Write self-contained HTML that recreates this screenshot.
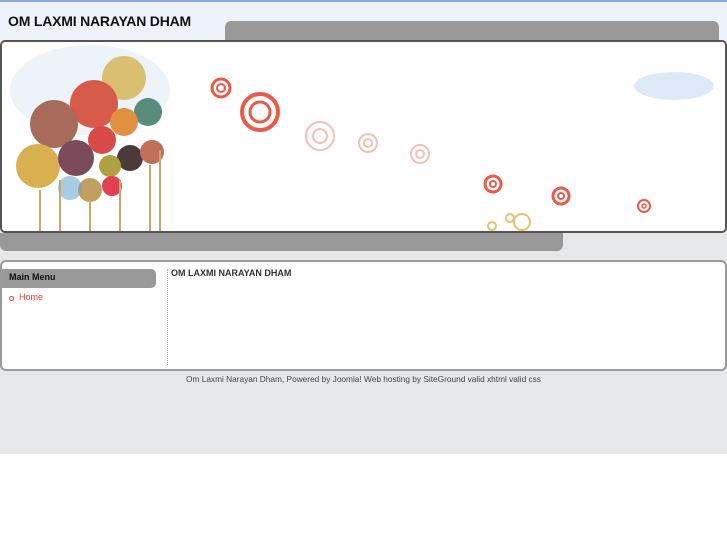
<!DOCTYPE html>
<html><head><style>
body{margin:0;width:727px;height:545px;background:#fff;font-family:"Liberation Sans",sans-serif;position:relative;overflow:hidden}
.top{position:absolute;left:0;top:0;width:727px;height:42px;background:#eef2fb;border-top:2px solid #8ca9e2;box-sizing:border-box}
.title{position:absolute;left:8px;top:11px;font-size:14px;font-weight:bold;color:#111;letter-spacing:-0.2px}
.tab{position:absolute;left:225px;top:21px;width:494px;height:22px;background:#999;border-radius:6px 6px 0 0}
.grey{position:absolute;left:0;top:232px;width:727px;height:222px;background:#e6e7e9}
.banner{position:absolute;left:0;top:40px;width:727px;height:193px;box-sizing:border-box;border:2px solid #555;border-radius:5px;background:#fff;overflow:hidden}
.bar{position:absolute;left:0;top:233px;width:563px;height:18px;background:#999;border-radius:0 0 6px 6px}
.content{position:absolute;left:0;top:260px;width:727px;height:111px;box-sizing:border-box;border:2px solid #9a9a9a;border-radius:6px;background:#fff}
.mm{position:absolute;left:0;top:7px;width:154px;height:19px;background:#999;border-radius:0 5px 5px 0;font-size:9px;font-weight:bold;color:#111;line-height:17px;padding-left:7px;box-sizing:border-box}
.home{position:absolute;left:17px;top:30px;font-size:9px;color:#e0452f}
.bul{position:absolute;left:7px;top:34px;width:3px;height:3px;border:1px solid #e0452f;border-radius:50%}
.div{position:absolute;left:165px;top:7px;height:96px;border-left:1px dotted #9ab6e0}
.h{position:absolute;left:169px;top:6px;font-size:9px;font-weight:bold;color:#333}
.foot{position:absolute;left:0;top:374px;width:727px;text-align:center;font-size:8.3px;color:#444}
</style></head><body>
<div class="top"><div class="title">OM LAXMI NARAYAN DHAM</div></div>
<div class="tab"></div>
<div class="grey"></div>
<div class="banner">
<svg width="727" height="193" style="position:absolute;left:-2px;top:-2px" viewBox="0 40 727 193">
<g fill="none">
<ellipse cx="90" cy="90" rx="80" ry="45" fill="#cfe2ef" opacity=".4"/>
<circle cx="124" cy="78" r="22" fill="#d8c070"/>
<circle cx="94" cy="104" r="24" fill="#d85a4a"/>
<circle cx="54" cy="124" r="24" fill="#a86a5a"/>
<circle cx="148" cy="112" r="14" fill="#5a8a7a"/>
<circle cx="124" cy="122" r="14" fill="#e09040"/>
<circle cx="38" cy="166" r="22" fill="#d8b050"/>
<circle cx="76" cy="158" r="18" fill="#7a4a5a"/>
<circle cx="102" cy="140" r="14" fill="#d84a4a"/>
<circle cx="130" cy="158" r="13" fill="#4a3a3a"/>
<circle cx="152" cy="152" r="12" fill="#c0705a"/>
<circle cx="110" cy="166" r="11" fill="#b0a040"/>
<circle cx="90" cy="190" r="12" fill="#c0a060"/>
<circle cx="112" cy="186" r="10" fill="#e04050"/>
<circle cx="70" cy="188" r="12" fill="#6aa8d0" opacity=".6"/>
<path d="M40 190v45M60 180v55M90 200v35M120 180v55M150 165v70M160 150v85" stroke="#c8a868" stroke-width="2"/>
<g stroke="#e85a4a" stroke-width="3">
<circle cx="221" cy="88" r="9"/><circle cx="221" cy="88" r="4" stroke-width="2"/>
<circle cx="260" cy="112" r="18" stroke-width="4"/><circle cx="260" cy="112" r="10"/>
<circle cx="493" cy="184" r="8"/><circle cx="493" cy="184" r="3" stroke-width="2"/>
<circle cx="561" cy="196" r="8"/><circle cx="561" cy="196" r="3" stroke-width="2"/>
<circle cx="644" cy="206" r="6" stroke-width="2"/><circle cx="644" cy="206" r="2" stroke-width="1.5"/>
</g>
<g stroke="#f4c0b8" stroke-width="2">
<circle cx="320" cy="136" r="14"/><circle cx="320" cy="136" r="7"/>
<circle cx="368" cy="143" r="9"/><circle cx="368" cy="143" r="4"/>
<circle cx="420" cy="154" r="9"/><circle cx="420" cy="154" r="4"/>
</g>
<g stroke="#e8c070" stroke-width="2"><circle cx="522" cy="222" r="8"/><circle cx="492" cy="226" r="4"/><circle cx="510" cy="218" r="4"/></g>
<ellipse cx="674" cy="86" rx="40" ry="14" fill="#c8daf4" opacity=".6"/>
</g></svg>
</div>
<div class="bar"></div>
<div class="content">
<div class="mm">Main Menu</div>
<div class="bul"></div><div class="home">Home</div>
<div class="div"></div>
<div class="h">OM LAXMI NARAYAN DHAM</div>
</div>
<div class="foot">Om Laxmi Narayan Dham, Powered by Joomla! Web hosting by SiteGround valid xhtml valid css</div>
</body></html>
